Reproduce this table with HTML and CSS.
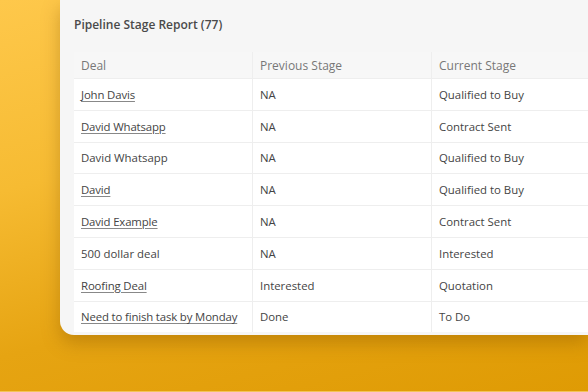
FILE: index.html
```html
<!DOCTYPE html>
<html lang="en">
<head>
  <meta charset="UTF-8" />
  <meta name="viewport" content="width=device-width, initial-scale=1.0"/>
  <title>Pipeline Stage Report</title>
  <link rel="stylesheet" href="styles.css">
</head>
<body>
  <div class="report-panel">
    <h2 class="report-title">Pipeline Stage Report (77)</h2>

    <table class="report-table">
      <thead>
        <tr>
          <th>Deal</th>
          <th>Previous Stage</th>
          <th>Current Stage</th>
        </tr>
      </thead>
      <tbody>
        <tr>
          <td><a href="#" class="deal-link">John Davis</a></td>
          <td>NA</td>
          <td>Qualified to Buy</td>
        </tr>
        <tr>
          <td><a href="#" class="deal-link">David Whatsapp</a></td>
          <td>NA</td>
          <td>Contract Sent</td>
        </tr>
        <tr>
          <td>David Whatsapp</td>
          <td>NA</td>
          <td>Qualified to Buy</td>
        </tr>
        <tr>
          <td><a href="#" class="deal-link">David</a></td>
          <td>NA</td>
          <td>Qualified to Buy</td>
        </tr>
        <tr>
          <td><a href="#" class="deal-link">David Example</a></td>
          <td>NA</td>
          <td>Contract Sent</td>
        </tr>
        <tr>
          <td>500 dollar deal</td>
          <td>NA</td>
          <td>Interested</td>
        </tr>
        <tr>
          <td><a href="#" class="deal-link">Roofing Deal</a></td>
          <td>Interested</td>
          <td>Quotation</td>
        </tr>
        <tr>
          <td><a href="#" class="deal-link">Need to finish task by Monday</a></td>
          <td>Done</td>
          <td>To Do</td>
        </tr>
      </tbody>
    </table>
  </div>
</body>
</html>
```

FILE: styles.css
```css
html, body {
  margin: 0; padding: 0;
}

body {
  height: 391px;
  border-bottom: 1px solid #f3c459;
  background: linear-gradient(165deg, #fec84b 0%, #f6bb32 35%, #e6a412 65%, #df9b04 100%);
  font-family: "Open Sans", "Noto Sans", sans-serif;
  overflow: hidden;
}

.report-panel {
  margin-left: 60px;
  width: 528px;
  height: 335px;
  padding: 0 0 0 14px;
  box-sizing: border-box;
  background: #f6f6f6;
  border-radius: 0 0 0 14px;
  box-shadow: 0 8px 18px rgba(130, 80, 0, 0.35);
  display: flex; flex-direction: column;
  overflow: hidden;
}

.report-title {
  margin: 17px 0 0;
  height: 35px;
  font-size: 12px;
  line-height: 16px;
  font-weight: 600;
  color: #4a4a4a;
}

.report-table {
  border-collapse: collapse;
  table-layout: fixed;
  width: 534px;
  background: #fff;
  font-size: 11.4px;
  color: #444;
}

.report-table th,
.report-table td {
  width: 164px;
  padding: 0 7px;
  text-align: left;
  white-space: nowrap;
  border: 1px solid #eeeeee;
  border-top: none;
}

.report-table th:first-child,
.report-table td:first-child { border-left: none; }

.report-table th {
  height: 26px;
  background: #f7f7f7;
  font-size: 12px;
  font-weight: 400;
  color: #777;
}

.report-table td {
  height: 30.8px;
}

.report-table tbody tr:last-child td { border-bottom: none; }

.deal-link {
  color: #444;
  letter-spacing: -0.15px;
  text-decoration: underline;
  text-decoration-color: #888;
  text-underline-offset: 2px;
}
```
